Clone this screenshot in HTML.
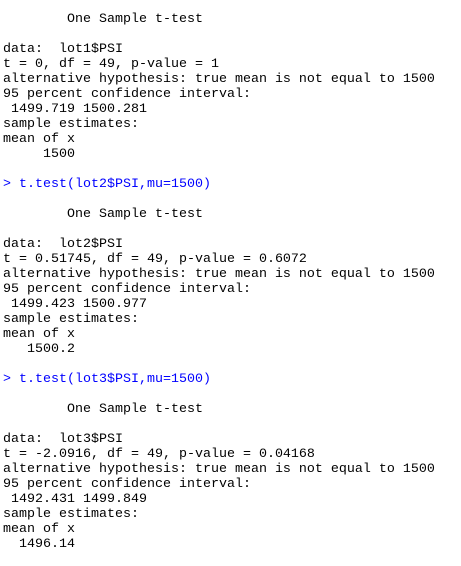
<!DOCTYPE html>
<html><head><meta charset="utf-8"><style>
html,body{margin:0;padding:0;background:#fff;width:461px;height:566px;overflow:hidden}
pre{margin:0;padding:12px 0 0 3px;font-family:"Liberation Mono","DejaVu Sans Mono",monospace;font-size:13.33px;line-height:15px;color:#000}
.p{color:#0000ff}
</style></head><body><pre>        One Sample t-test

data:  lot1$PSI
t = 0, df = 49, p-value = 1
alternative hypothesis: true mean is not equal to 1500
95 percent confidence interval:
 1499.719 1500.281
sample estimates:
mean of x 
     1500 

<span class="p">&gt; t.test(lot2$PSI,mu=1500)</span>

        One Sample t-test

data:  lot2$PSI
t = 0.51745, df = 49, p-value = 0.6072
alternative hypothesis: true mean is not equal to 1500
95 percent confidence interval:
 1499.423 1500.977
sample estimates:
mean of x 
   1500.2 

<span class="p">&gt; t.test(lot3$PSI,mu=1500)</span>

        One Sample t-test

data:  lot3$PSI
t = -2.0916, df = 49, p-value = 0.04168
alternative hypothesis: true mean is not equal to 1500
95 percent confidence interval:
 1492.431 1499.849
sample estimates:
mean of x 
  1496.14 
</pre></body></html>
